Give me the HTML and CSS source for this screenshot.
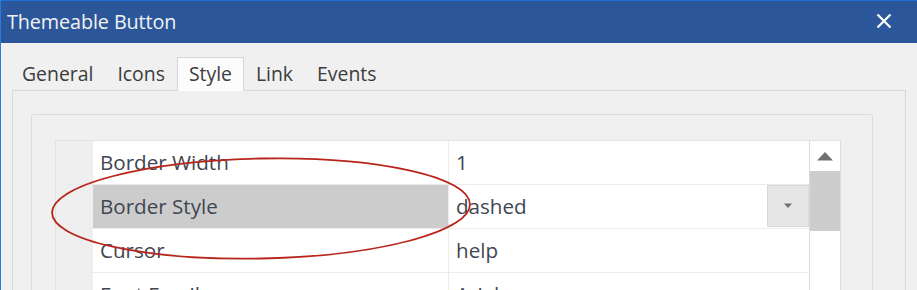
FILE: index.html
```html
<!DOCTYPE html>
<html>
<head>
<meta charset="utf-8">
<link rel="stylesheet" href="styles.css">
</head>
<body>
<div class="window">
  <div class="titlebar">
    <span class="title">Themeable Button</span>
    <svg class="close" width="16" height="16" viewBox="0 0 16 16"><path d="M1.5 1.5 L14.5 14.5 M14.5 1.5 L1.5 14.5" stroke="#fff" stroke-width="2.2" fill="none"/></svg>
  </div>
  <div class="tabs">
    <span class="tab">General</span>
    <span class="tab">Icons</span>
    <span class="tab active">Style</span>
    <span class="tab">Link</span>
    <span class="tab">Events</span>
  </div>
  <div class="panel">
    <div class="group">
      <div class="grid">
        <div class="rows">
          <div class="row">
            <div class="hdr"></div>
            <div class="name">Border Width</div>
            <div class="value">1</div>
          </div>
          <div class="row">
            <div class="hdr"></div>
            <div class="name sel">Border Style</div>
            <div class="value">dashed<span class="drop"><svg width="10" height="6" viewBox="0 0 10 6"><path d="M1 0.5 L9 0.5 L5 5 Z" fill="#707070"/></svg></span></div>
          </div>
          <div class="row">
            <div class="hdr"></div>
            <div class="name">Cursor</div>
            <div class="value">help</div>
          </div>
          <div class="row">
            <div class="hdr"></div>
            <div class="name">Font Family</div>
            <div class="value">Arial</div>
          </div>
        </div>
        <div class="scroll">
          <div class="up"><svg width="18" height="10" viewBox="0 0 18 10"><path d="M1 9.5 L17 9.5 L9 1 Z" fill="#707070"/></svg></div>
          <div class="thumb"></div>
          <div class="track"></div>
        </div>
      </div>
    </div>
  </div>
  <svg class="ellipse" width="917" height="290" viewBox="0 0 917 290">
    <ellipse cx="261" cy="208.5" rx="209" ry="50" fill="none" stroke="#b8251b" stroke-width="1.8" transform="rotate(-1.2 261 208.5)"/>
  </svg>
</div>
</body>
</html>
```
FILE: styles.css
```css
html, body {
  margin: 0;
  padding: 0;
}
body {
  width: 917px;
  height: 290px;
  overflow: hidden;
  background: #f0f0f0;
  font-family: "Open Sans", "Noto Sans", sans-serif;
  color: #444;
}
.window {
  position: relative;
  height: 290px;
  border-left: 1px solid #2f7ad6;
  box-sizing: border-box;
}
.titlebar {
  height: 43px;
  background: #2b579a;
  border-top: 1px solid #1f6fd6;
  box-sizing: border-box;
  display: flex;
  align-items: center;
  justify-content: space-between;
  padding: 0 25px 1px 6px;
}
.title {
  color: #f2f2f2;
  font-size: 19.8px;
  letter-spacing: -0.1px;
}
.close {
  display: block;
  margin-top: -2px;
}
.tabs {
  display: flex;
  padding: 14px 0 0 9px;
  height: 33px;
}
.tab {
  font-size: 19.4px;
  color: #3c3c3c;
  padding: 0 11px;
  line-height: 32px;
  box-sizing: border-box;
  height: 33px;
  border: 1px solid transparent;
  border-bottom: none;
}
.tab.active {
  background: #fcfcfc;
  border-color: #d6d6d6;
  position: relative;
  z-index: 1;
  height: 34px;
}
.panel {
  margin-left: 11px;
  width: 894px;
  height: 220px;
  border: 1px solid #d9d9d9;
  box-sizing: border-box;
  padding: 23px 32px 0 18px;
  background: #f0f0f0;
}
.group {
  border: 1px solid #dcdcdc;
  border-radius: 3px;
  height: 200px;
  padding: 25px 31px 0 23px;
}
.grid {
  display: flex;
  border-top: 1px solid #e2e2e2;
  border-left: 1px solid #e2e2e2;
  height: 160px;
}
.rows {
  flex: 1;
  background: #fff;
}
.row {
  display: flex;
  height: 43px;
  border-bottom: 1px solid #ececec;
}
.hdr {
  width: 37px;
  background: #efefef;
  flex: none;
}
.name {
  width: 356px;
  box-sizing: border-box;
  flex: none;
  padding-left: 7px;
  font-size: 20.6px;
  line-height: 43px;
  border-right: 1px solid #ececec;
  color: #3f4651;
}
.name.sel {
  background: #cccccc;
}
.value {
  flex: 1;
  position: relative;
  padding-left: 7px;
  font-size: 20.6px;
  line-height: 43px;
  color: #3f4651;
}
.drop {
  position: absolute;
  right: 0;
  top: 0;
  width: 42px;
  height: 42px;
  background: #e6e6e6;
  border: 1px solid #d8d8d8;
  box-sizing: border-box;
  display: flex;
  align-items: center;
  justify-content: center;
}
.drop svg {
  display: block;
}
.scroll {
  width: 30px;
  flex: none;
  border: 1px solid #dcdcdc;
  border-top: none;
  display: flex;
  flex-direction: column;
  background: #fff;
}
.up {
  height: 30px;
  display: flex;
  align-items: center;
  justify-content: center;
}
.up svg {
  display: block;
}
.thumb {
  height: 60px;
  background: #cdcdcd;
}
.track {
  flex: 1;
  background: #fff;
}
.ellipse {
  position: absolute;
  left: -1px;
  top: 0;
  pointer-events: none;
}
```
